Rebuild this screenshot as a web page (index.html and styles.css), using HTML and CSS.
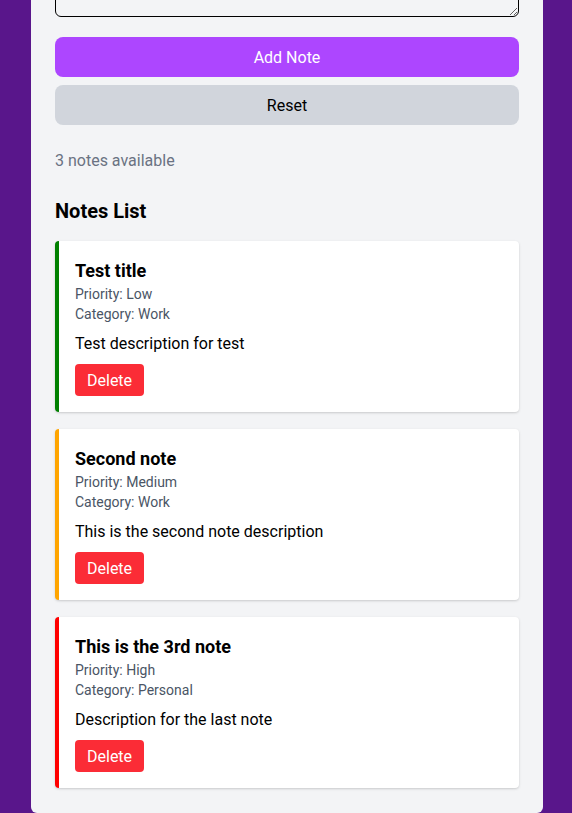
FILE: index.html
```html
<!DOCTYPE html>
<html lang="en">
<head>
<meta charset="utf-8">
<title>Notes</title>
<link rel="stylesheet" href="styles.css">
</head>
<body>
<main class="panel">
  <form class="note-form">
    <textarea class="field-area" aria-label="Description"></textarea>
    <button type="button" class="btn btn-add">Add Note</button>
    <button type="button" class="btn btn-reset">Reset</button>
  </form>
  <p class="count">3 notes available</p>
  <h2 class="list-title">Notes List</h2>
  <div class="notes">
    <article class="note note-low">
      <h3 class="note-title">Test title</h3>
      <p class="meta">Priority: Low</p>
      <p class="meta">Category: Work</p>
      <p class="desc">Test description for test</p>
      <button type="button" class="btn-delete">Delete</button>
    </article>
    <article class="note note-medium">
      <h3 class="note-title">Second note</h3>
      <p class="meta">Priority: Medium</p>
      <p class="meta">Category: Work</p>
      <p class="desc">This is the second note description</p>
      <button type="button" class="btn-delete">Delete</button>
    </article>
    <article class="note note-high">
      <h3 class="note-title">This is the 3rd note</h3>
      <p class="meta">Priority: High</p>
      <p class="meta">Category: Personal</p>
      <p class="desc">Description for the last note</p>
      <button type="button" class="btn-delete">Delete</button>
    </article>
  </div>
</main>
</body>
</html>
```
FILE: styles.css
```css
* { box-sizing: border-box; }
html, body { margin: 0; padding: 0; }
body {
  background: #59168b;
  font-family: Roboto, "Noto Sans", sans-serif;
  color: #000;
  padding: 0 29px 1px 31px;
  overflow: hidden;
}
.panel {
  background: #f3f4f6;
  margin-top: -40px;
  padding: 0 24px 25px;
  border-radius: 0 0 6px 6px;
}
.note-form {
  display: flex;
  flex-direction: column;
  gap: 8px;
}
.field-area {
  display: block;
  width: 100%;
  height: 57px;
  border: 1px solid #000;
  border-radius: 6px;
  background: #f3f4f6;
  margin-bottom: 12px;
  font: inherit;
}
.btn {
  height: 40px;
  border: 0;
  border-radius: 8px;
  font: inherit;
  font-size: 16px;
}
.btn-add { background: #ad46ff; color: #fff; }
.btn-reset { background: #d1d5dc; color: #000; }
.count {
  margin: 24px 0 0;
  font-size: 16px;
  line-height: 24px;
  color: #6a7282;
}
.list-title {
  margin: 24px 0 16px;
  font-size: 20px;
  line-height: 28px;
  font-weight: 700;
}
.notes {
  display: flex;
  flex-direction: column;
  gap: 17px;
}
.note {
  background: #fff;
  border-left: 4px solid;
  border-radius: 4px;
  padding: 16px;
  box-shadow: 0 1px 3px rgba(0,0,0,0.12), 0 1px 2px rgba(0,0,0,0.06);
  display: flex;
  flex-direction: column;
  align-items: flex-start;
}
.note-low { border-left-color: #008000; }
.note-medium { border-left-color: #ffa500; }
.note-high { border-left-color: #ff0000; }
.note-title {
  margin: 0;
  font-size: 18px;
  line-height: 27px;
  font-weight: 700;
}
.meta {
  margin: 0;
  font-size: 14px;
  line-height: 20px;
  color: #4a5565;
}
.desc {
  margin: 8px 0 0;
  font-size: 16px;
  line-height: 24px;
}
.btn-delete {
  margin-top: 8px;
  height: 32px;
  padding: 0 12px;
  border: 0;
  border-radius: 4px;
  background: #fb2c36;
  color: #fff;
  font: inherit;
  font-size: 16px;
}
```
